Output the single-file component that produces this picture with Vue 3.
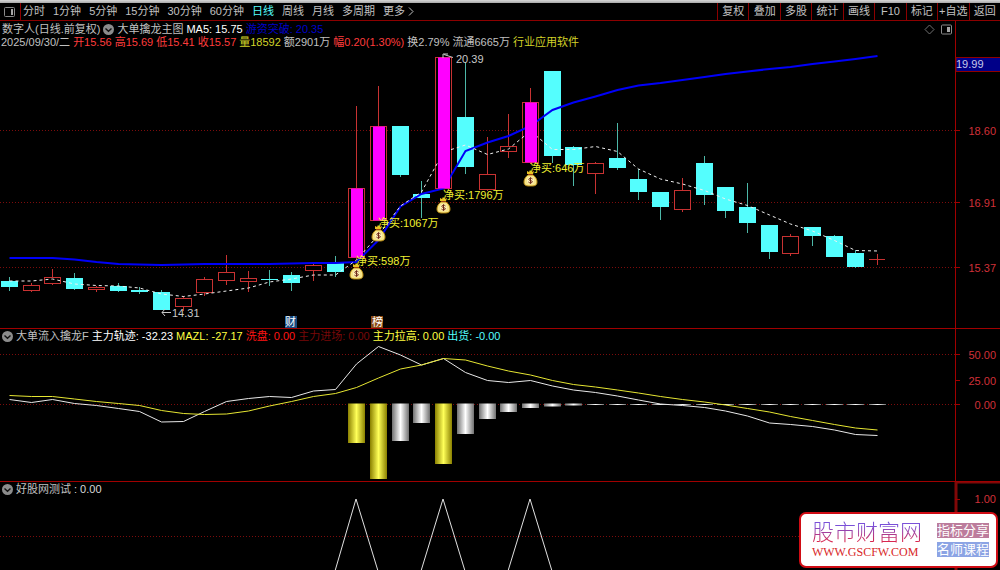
<template>
  <main ref="root" class="terminal">
    <div class="window-edge"></div>

    <nav class="toolbar">
      <button class="tool-btn layout-btn" aria-label="布局">
        <svg width="12" height="10" viewBox="0 0 12 10">
          <rect x="0.5" y="0.5" width="10" height="9" rx="1" fill="none" stroke="#8a8a8a" />
          <rect x="7" y="2" width="2" height="6" fill="#a8a8a8" />
        </svg>
      </button>
      <div class="periods">
        <button
          v-for="item in periods"
          :key="item"
          class="tool-btn"
          :class="{ active: item === activePeriod }"
          @click="activePeriod = item"
        >{{ item }}</button>
        <button class="tool-btn more-btn">
          更多
          <svg width="6" height="9" viewBox="0 0 6 9">
            <path d="M1 0.5 L5 4.5 L1 8.5" fill="none" stroke="#c0c0c0" />
          </svg>
        </button>
      </div>
      <div class="actions">
        <button v-for="item in actions" :key="item" class="tool-btn action-btn">{{ item }}</button>
      </div>
    </nav>

    <!-- Main candle chart -->
    <section class="panel">
      <svg class="plot" :width="width" height="307" :viewBox="`0 21 ${width} 307`">
        <line v-for="y in [130.5, 202.5, 267.5]" :key="y" class="grid" x1="0" :x2="axisX" :y1="y" :y2="y" />

        <g v-for="(c, i) in candles" :key="i">
          <line
            :x1="px(i) + 0.5" :x2="px(i) + 0.5" :y1="c[2]" :y2="c[3]"
            :stroke="c[4] === 'd' ? '#4db8a8' : '#c83232'"
          />
          <rect v-if="c[4] === 'd'" :x="px(i) - 8" :y="c[0]" width="17" :height="c[1] - c[0]" fill="#54fefe" />
          <line
            v-else-if="c[0] === c[1]"
            :x1="px(i) - 8" :x2="px(i) + 8" :y1="c[0]" :y2="c[0]" stroke="#c83232"
          />
          <rect
            v-else
            :x="px(i) - 7.5" :y="c[0]" width="16" :height="c[1] - c[0]"
            fill="#000" stroke="#c83232"
          />
        </g>

        <polyline class="blue-line" :points="toPoints(breakLine)" />
        <polyline class="ma-line" :points="toPoints(ma5)" />

        <template v-for="(c, i) in candles" :key="i">
          <rect v-if="c[4] === 'm'" :x="px(i) - 5" :y="c[0]" width="12" :height="c[1] - c[0]" fill="#ff00ff" />
        </template>

        <!-- High and low marks -->
        <path :d="`M${px(20) + 10} 57.5 L${px(20) + 1} 54.5 M${px(20) + 5} 54 H${px(20)} V58`" class="arrow" />
        <text class="price" :x="px(20) + 13" y="63">20.39</text>
        <path :d="`M${px(7) + 10} 312.5 H${px(7) + 1} M${px(7) + 4} 309 L${px(7) + 1} 312.5 L${px(7) + 4} 316`" class="arrow" />
        <text class="price" :x="px(7) + 11" y="317">14.31</text>

        <g v-for="buy in buys" :key="buy.index">
          <g :transform="`translate(${px(buy.index)} ${buy.y})`">
            <path d="M-3 2 L-3 -1 L-1 0 L0 -2 L2 0 L4 -1 L3 2 Z" fill="#e8c020" />
            <path d="M-2 3 C-5 5 -6 8 -6 10 C-6 14 -3 14 0.5 14 C4 14 7 14 7 10 C7 8 6 5 3 3 Z" fill="#f7e488" stroke="#b88a10" />
            <path d="M-2 2.5 H3" stroke="#a04010" />
            <circle cx="0.5" cy="8.5" r="3.5" fill="#fff2b8" />
            <path d="M2.5 7 C1.5 5.8 -1.2 6 -1.2 7.4 C-1.2 9 2.4 8.2 2.4 9.8 C2.4 11.2 -0.8 11.2 -1.6 10 M0.5 5.3 V11.8" fill="none" stroke="#702818" />
          </g>
          <text class="buy" :x="px(buy.index)" :y="buy.y">净买:{{ buy.amount }}万</text>
        </g>

        <rect :x="px(13) - 6" y="316" width="12" height="12" fill="#164a80" />
        <text class="mark" :x="px(13) - 6" y="326">财</text>
        <rect :x="px(17) - 7" y="316" width="12" height="12" fill="#8a4a14" />
        <text class="mark" :x="px(17) - 6" y="326">榜</text>

        <line class="axis" :x1="axisX + 0.5" :x2="axisX + 0.5" y1="21" y2="328" />
        <g v-for="tick in priceTicks" :key="tick.label">
          <line class="axis" :x1="axisX" :x2="axisX + 5" :y1="tick.y" :y2="tick.y" />
          <text class="tick" :x="width - 4" :y="tick.y + 4">{{ tick.label }}</text>
        </g>
        <rect :x="axisX + 1" y="57.5" :width="width - axisX" height="14" fill="#000088" stroke="#900000" />
        <text class="current" :x="axisX + 1" y="68">19.99</text>
      </svg>
      <header class="panel-head">
        <div class="row title-row">
          <span class="c-gray">数字人(日线.前复权)</span>
          <button class="toggle" aria-label="主图指标"><ToggleIcon /></button>
          <span class="c-gray">大单擒龙主图</span>
          <span class="c-white">MA5: 15.75</span>
          <span class="c-blue">游资突破: 20.35</span>
          <span class="corner">
            <svg width="28" height="11" viewBox="0 0 28 11">
              <path d="M5.5 1 L10 5.5 L5.5 10 L1 5.5 Z" fill="none" stroke="#707070" />
              <rect x="17.5" y="1" width="10" height="9" rx="1" fill="none" stroke="#8a8a8a" />
              <rect x="23" y="3" width="3" height="5" fill="#a8a8a8" />
            </svg>
          </span>
        </div>
        <div class="row quote-row">
          <span v-for="item in quote" :key="item.text" :class="item.cls">{{ item.text }}</span>
        </div>
      </header>
    </section>

    <!-- Money flow -->
    <section class="panel ruled">
      <svg class="plot" :width="width" height="152" :viewBox="`0 329 ${width} 152`">
        <defs>
          <linearGradient id="barYellow">
            <stop offset="0" stop-color="#8a8000" />
            <stop offset="0.5" stop-color="#ffff58" />
            <stop offset="1" stop-color="#8a8000" />
          </linearGradient>
          <linearGradient id="barGray">
            <stop offset="0" stop-color="#707070" />
            <stop offset="0.5" stop-color="#ffffff" />
            <stop offset="1" stop-color="#707070" />
          </linearGradient>
        </defs>
        <line v-for="y in [354.5, 404.5]" :key="y" class="grid" x1="0" :x2="axisX" :y1="y" :y2="y" />
        <rect
          v-for="bar in flowBars"
          :key="bar.index"
          :x="px(bar.index) - 8" :y="bar.bottom > 405 ? 403.5 : 404" width="17" :height="bar.bottom > 405 ? bar.bottom - 403.5 : 1"
          :fill="bar.yellow ? 'url(#barYellow)' : 'url(#barGray)'"
        />
        <polyline class="thin" stroke="#e8e8e8" :points="toPoints(track)" />
        <polyline class="thin" stroke="#e6e632" :points="toPoints(mazl)" />
        <line class="axis" :x1="axisX + 0.5" :x2="axisX + 0.5" y1="329" y2="481" />
        <g v-for="tick in flowTicks" :key="tick.label">
          <line class="axis" :x1="axisX" :x2="axisX + 5" :y1="tick.y" :y2="tick.y" />
          <text class="tick" :x="width - 4" :y="tick.y + 4">{{ tick.label }}</text>
        </g>
      </svg>
      <header class="panel-head row sub-row">
        <button class="toggle" aria-label="大单流入指标"><ToggleIcon /></button>
        <span class="c-gray">大单流入擒龙F</span>
        <span v-for="item in flowLegend" :key="item.text" :class="item.cls">{{ item.text }}</span>
      </header>
    </section>

    <!-- Signal test -->
    <section class="panel ruled">
      <svg class="plot" :width="width" height="88" :viewBox="`0 482 ${width} 88`">
        <line class="grid" x1="0" :x2="axisX" y1="536.5" y2="536.5" />
        <polyline
          v-for="i in [16, 20, 24]"
          :key="i"
          class="thin"
          stroke="#e0e0e0"
          :points="`${px(i - 1)},571 ${px(i)},499 ${px(i + 1)},571`"
        />
        <path class="axis thick" :d="`M${width} 482 H${axisX + 1} V570`" />
        <line class="axis" :x1="axisX" :x2="axisX + 5" y1="499.5" y2="499.5" />
        <text class="tick" :x="width - 4" y="503">1.00</text>
      </svg>
      <header class="panel-head row sub-row">
        <button class="toggle" aria-label="测试指标"><ToggleIcon /></button>
        <span class="c-gray">好股网测试</span>
        <span class="c-light">: 0.00</span>
      </header>
    </section>

    <aside class="brand">
      <div class="brand-main">
        <div class="brand-name">股市财富网</div>
        <a class="brand-url" href="#">WWW.GSCFW.COM</a>
      </div>
      <div class="brand-tags">
        <span class="tag-rose">指标分享</span>
        <span class="tag-blue">名师课程</span>
      </div>
    </aside>
  </main>
</template>

<script setup>
import { computed, h, onBeforeUnmount, onMounted, ref } from 'vue'

const ToggleIcon = () => h('svg', { class: 'toggle-icon', width: 11, height: 11, viewBox: '0 0 11 11' }, [
  h('circle', { cx: 5.5, cy: 5.5, r: 5.5, fill: '#8c8c8c' }),
  h('path', { d: 'M2.5 4.5 L5.5 7.3 L8.5 4.5', fill: 'none', stroke: '#111', 'stroke-width': 1.4 })
])

const root = ref(null)
const width = ref(window.innerWidth)
const activePeriod = ref('日线')

const axisX = computed(() => width.value - 45)

// 44 slots across the plot area
const px = (i) => Math.round(9 + (i * axisX.value) / 44)
const toPoints = (values) => values.map((y, i) => `${px(i) + 0.5},${y}`).join(' ')

let observer
onMounted(() => {
  observer = new ResizeObserver(() => {
    width.value = root.value.clientWidth
  })
  observer.observe(root.value)
})
onBeforeUnmount(() => observer.disconnect())

const periods = ['分时', '1分钟', '5分钟', '15分钟', '30分钟', '60分钟', '日线', '周线', '月线', '多周期']
const actions = ['复权', '叠加', '多股', '统计', '画线', 'F10', '标记', '+自选', '返回']

const quote = [
  { text: '2025/09/30/二', cls: 'c-gray' },
  { text: '开15.56', cls: 'c-red' },
  { text: '高15.69', cls: 'c-red' },
  { text: '低15.41', cls: 'c-red' },
  { text: '收15.57', cls: 'c-red' },
  { text: '量18592', cls: 'c-olive' },
  { text: '额2901万', cls: 'c-gray' },
  { text: '幅0.20(1.30%)', cls: 'c-red' },
  { text: '换2.79%', cls: 'c-gray' },
  { text: '流通6665万', cls: 'c-gray' },
  { text: '行业应用软件', cls: 'c-olive' }
]

const flowLegend = [
  { text: '主力轨迹: -32.23', cls: 'c-white' },
  { text: 'MAZL: -27.17', cls: 'c-yellow' },
  { text: '洗盘: 0.00', cls: 'c-bright-red' },
  { text: '主力进场: 0.00', cls: 'c-dark-red' },
  { text: '主力拉高: 0.00', cls: 'c-yellow' },
  { text: '出货: -0.00', cls: 'c-cyan' }
]

// [body top, body bottom, high, low, kind]  d = down, u = up, m = big order
const candles = [
  [281, 287, 277, 291, 'd'],
  [285.5, 290.5, 283, 292, 'u'],
  [277.5, 283.5, 269, 285, 'u'],
  [278, 289, 273, 290, 'd'],
  [287.5, 289.5, 286, 292, 'u'],
  [286, 291, 283, 292, 'd'],
  [290, 292, 287, 294, 'd'],
  [292, 310, 290, 310, 'd'],
  [298.5, 306.5, 296, 311, 'u'],
  [279.5, 292.5, 277, 296, 'u'],
  [272.5, 280.5, 255, 285, 'u'],
  [278.5, 281.5, 271, 292, 'u'],
  [279, 280, 270, 286, 'd'],
  [275, 283, 272, 291, 'd'],
  [265.5, 270.5, 263, 281, 'u'],
  [262, 272, 256, 277, 'd'],
  [188.5, 257.5, 106, 259, 'm'],
  [126.5, 220.5, 86, 221, 'm'],
  [126, 175, 126, 177, 'd'],
  [194, 198, 181, 218, 'd'],
  [57.5, 188.5, 57, 189, 'm'],
  [117, 167, 62, 174, 'd'],
  [174.5, 189.5, 137, 191, 'u'],
  [146.5, 151.5, 114, 158, 'u'],
  [102.5, 162.5, 88, 164, 'm'],
  [71, 156, 71, 163, 'd'],
  [147, 165, 146, 186, 'd'],
  [163.5, 173.5, 162, 194, 'u'],
  [158, 168, 123, 170, 'd'],
  [179, 192, 169, 200, 'd'],
  [192, 207, 192, 220, 'd'],
  [190.5, 209.5, 178, 212, 'u'],
  [163, 195, 156, 205, 'd'],
  [187, 211, 187, 218, 'd'],
  [207, 223, 183, 233, 'd'],
  [225, 252, 225, 259, 'd'],
  [236.5, 253.5, 234, 256, 'u'],
  [227, 236, 227, 246, 'd'],
  [236, 257, 235, 257, 'd'],
  [253, 267, 250, 268, 'd'],
  [259.5, 259.5, 254, 265, 'u']
]

const ma5 = [
  281, 281, 279, 284, 285.5, 286, 288, 294, 296.5, 294, 291, 288, 282, 279, 275, 275, 260, 235, 206, 192, 152,
  145, 154.5, 149, 131, 149.5, 149.5, 146.5, 151.5, 169, 179, 184, 190.5, 199, 205.5, 215, 224, 231, 240.5, 250.5, 251
]

const breakLine = [
  258, 258, 258, 259.5, 262, 264, 264.5, 265, 264.5, 264, 264, 264, 264, 263.5, 263, 263, 262, 240, 206.5, 194, 188.5,
  151, 142.5, 136, 126, 110, 102.5, 96.5, 90, 85.5, 83, 80, 77, 74, 71.5, 69, 67, 64, 61.5, 59, 56
]

const track = [
  399.5, 402.5, 399.5, 403.5, 405.5, 408.5, 411.5, 422, 421.5, 411.5, 401.5, 398.5, 396.5, 397.5, 391, 389.5, 364, 346.5,
  355, 365, 358.5, 372.5, 380.5, 382.5, 380.5, 386, 390, 392.5, 396, 400, 404, 405.5, 407.5, 411, 416, 423, 424.5, 426.5,
  430, 434.5, 435.5
]

const mazl = [
  395.5, 396.5, 396.5, 399, 401.5, 403.5, 405.5, 410.5, 413.5, 414.5, 414, 411, 406, 401.5, 396.5, 393.5, 387.5, 378,
  369, 365, 358.5, 360, 366, 371, 375, 380.5, 384.5, 387, 390, 393, 396.5, 399.5, 402, 405, 408.5, 412, 416.5, 420.5,
  424.5, 428, 430
]

const barBottoms = [443, 479, 441, 423, 464, 434, 419, 412, 408, 406.5, 405.5]
const flowBars = candles.slice(16).map((_, i) => ({
  index: i + 16,
  bottom: barBottoms[i] ?? 405,
  yellow: [0, 1, 4].includes(i)
}))

const buys = [
  { index: 16, y: 265, amount: 598 },
  { index: 17, y: 227, amount: 1067 },
  { index: 20, y: 199, amount: 1796 },
  { index: 24, y: 172, amount: 646 }
]

const priceTicks = [
  { label: '18.60', y: 130.5 },
  { label: '16.91', y: 202.5 },
  { label: '15.37', y: 267.5 }
]

const flowTicks = [
  { label: '50.00', y: 354.5 },
  { label: '25.00', y: 380.5 },
  { label: '0.00', y: 404.5 }
]
</script>

<style>
body {
  background: #000;
}
</style>

<style scoped>
.terminal {
  position: relative;
  display: flex;
  flex-direction: column;
  overflow: hidden;
  background: #000;
  color: #c0c0c0;
  font-family: "Liberation Sans", "Noto Sans CJK SC", sans-serif;
  font-size: 11px;
  line-height: 13px;
}

.window-edge {
  height: 3px;
  background: linear-gradient(#d8d8d8, #a8a8a8);
}

.toolbar {
  display: flex;
  height: 18px;
  box-sizing: border-box;
  border-bottom: 1px solid #8c0000;
}

.tool-btn {
  padding: 0;
  border: 0;
  background: none;
  color: #c0c0c0;
  font: inherit;
  white-space: nowrap;
  cursor: pointer;
}

.layout-btn {
  display: flex;
  align-items: center;
  justify-content: center;
  width: 21px;
  border-right: 1px solid #8c0000;
}

.periods {
  display: flex;
  flex: 1;
  gap: 8px;
  padding-left: 2px;
}

.periods .active {
  color: #54fefe;
}

.more-btn {
  display: flex;
  align-items: center;
  gap: 3px;
}

.actions {
  display: grid;
  grid-template-columns: repeat(9, 1fr);
  width: 283px;
}

.action-btn {
  border-left: 1px solid #8c0000;
}

.panel {
  display: grid;
}

.ruled {
  border-top: 1px solid #a00000;
}

.plot,
.panel-head {
  grid-area: 1 / 1;
}

.plot {
  display: block;
}

.panel-head {
  align-self: start;
  z-index: 1;
}

.row {
  display: flex;
  align-items: center;
  white-space: nowrap;
}

.title-row {
  gap: 3px;
  padding: 2px 48px 0 2px;
}

.quote-row {
  gap: 3px;
  padding-left: 1px;
}

.sub-row {
  gap: 3px;
  padding: 1px 0 0 2px;
}

.corner {
  display: flex;
  margin-left: auto;
}

.toggle {
  display: flex;
  padding: 0;
  border: 0;
  background: none;
  cursor: pointer;
}

.c-gray { color: #c0c0c0; }
.c-light { color: #d8d8d8; }
.c-white { color: #fff; }
.c-blue { color: #0000c8; }
.c-red { color: #ff3c3c; }
.c-olive { color: #d2d228; }
.c-yellow { color: #ffff40; }
.c-bright-red { color: #ff1414; }
.c-dark-red { color: #780808; }
.c-cyan { color: #54fefe; }

.grid {
  stroke: #7c0c0c;
  stroke-dasharray: 1 2;
}

.axis {
  fill: none;
  stroke: #a00000;
}

.thick {
  stroke: #800808;
  stroke-width: 3;
}

.blue-line {
  fill: none;
  stroke: #0000f8;
  stroke-width: 2;
}

.ma-line {
  fill: none;
  stroke: #f0f0f0;
  stroke-dasharray: 3 3;
}

.thin {
  fill: none;
}

.arrow {
  fill: none;
  stroke: #c8c8c8;
}

.price {
  fill: #c8c8c8;
}

.buy {
  fill: #f0f030;
}

.mark {
  fill: #fff;
}

.tick {
  fill: #d03038;
  text-anchor: end;
}

.current {
  fill: #c8c8e8;
}

.brand {
  position: absolute;
  right: 2px;
  bottom: 2px;
  z-index: 2;
  display: flex;
  align-items: center;
  gap: 15px;
  padding: 7px 7px 7px 11px;
  border: 2px solid #d00c14;
  border-radius: 7px;
  background: #fff;
}

.brand-name {
  background: linear-gradient(#7a50d8 20%, #d82850 85%);
  background-clip: text;
  color: transparent;
  font-size: 22px;
  font-weight: 300;
  line-height: 24px;
}

.brand-url {
  display: block;
  color: #d82828;
  font-family: "Liberation Serif", serif;
  font-size: 12px;
  line-height: 14px;
  text-decoration: none;
}

.brand-tags {
  display: flex;
  flex-direction: column;
  gap: 4px;
  color: #fff;
  font-size: 13px;
  line-height: 15px;
}

.tag-rose {
  background: #bc7c9c;
}

.tag-blue {
  background: #8ca4e4;
}
</style>
